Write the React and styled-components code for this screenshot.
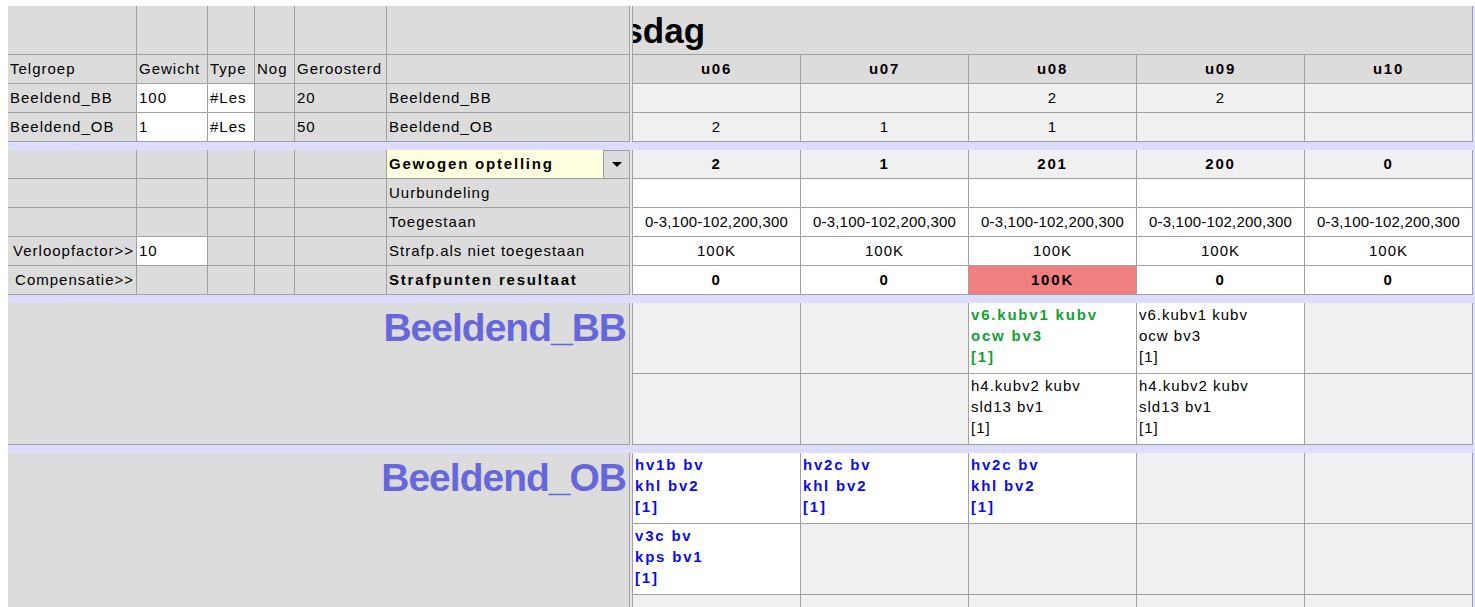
import React from 'react';
import styled, { createGlobalStyle } from 'styled-components';

const c = {
  line: '#a0a0a0',
  head: '#dcdcdc',
  cell: '#f0f0f0',
  white: '#ffffff',
  band: '#dcdcfc',
  yellow: '#ffffe0',
  red: '#f08080',
  green: '#13a033',
  blue: '#0c0ce8',
  label: '#6767dc',
  text: '#000000',
};

const GlobalStyle = createGlobalStyle`
  html, body {
    margin: 0;
    overflow: hidden;
    background: #fff;
  }
  body {
    padding: 6px 0 0 8px;
  }
`;

const Board = styled.div`
  display: flex;
  flex-direction: column;
  gap: 8px;
  height: calc(100vh - 6px);
  overflow: hidden;
  background: ${c.band};
  font-family: "Liberation Sans", Arial, sans-serif;
  color: ${c.text};
`;

const Section = styled.div`
  flex-shrink: 0;
  display: grid;
  grid-template-columns: 129px 71px 47px 40px 92px 243px 3px repeat(5, 168px);
  grid-template-rows: ${p => p.$rows};
`;

const Cell = styled.div`
  box-sizing: border-box;
  border-right: 1px solid ${c.line};
  border-bottom: 1px solid ${c.line};
  background: ${p => c[p.$tone || 'head']};
  padding: 0 2px;
  font-size: 15px;
  line-height: 28px;
  font-weight: ${p => (p.$bold ? 700 : 400)};
  letter-spacing: ${p => (p.$tight ? '0.2px' : p.$bold ? '1.8px' : '1px')};
  text-align: ${p => p.$align || 'left'};
  white-space: nowrap;
  overflow: hidden;
`;

const Splitter = styled.div`
  grid-column: 7;
  grid-row: 1 / -1;
  box-sizing: border-box;
  background: #e6e6e6;
  border-right: 1px solid ${c.line};
`;

const DayTitle = styled.div`
  grid-column: 8 / span 5;
  box-sizing: border-box;
  border-right: 1px solid ${c.line};
  border-bottom: 1px solid ${c.line};
  background: ${c.head};
  overflow: hidden;
  white-space: nowrap;
  padding-top: 7px;
  font-size: 35px;
  line-height: 1;
  font-weight: 700;
`;

/* the day header is scrolled: only the tail of the name is in view */
const ScrolledText = styled.span`
  display: inline-block;
  margin-left: -66px;
`;

const PickCell = styled(Cell)`
  display: flex;
  padding: 0;
`;

const PickValue = styled.span`
  flex: 1;
  padding-left: 2px;
  background: ${c.yellow};
`;

const PickButton = styled.span`
  width: 25px;
  display: flex;
  align-items: center;
  justify-content: center;
  background: ${c.head};
  border-left: 1px solid ${c.line};
  border-top: 1px solid ${c.line};
`;

const Caret = styled.span`
  width: 0;
  height: 0;
  border-left: 5px solid transparent;
  border-right: 5px solid transparent;
  border-top: 5px solid #000;
`;

const GroupLabel = styled.div`
  grid-column: 1 / span 6;
  grid-row: 1 / -1;
  box-sizing: border-box;
  border-right: 1px solid ${c.line};
  border-bottom: 1px solid ${c.line};
  background: ${c.head};
  padding: 5px 3px 0 0;
  text-align: right;
  font-size: 39px;
  line-height: 1;
  font-weight: 700;
  letter-spacing: -1px;
  color: ${c.label};
`;

const LessonCell = styled.div`
  box-sizing: border-box;
  border-right: 1px solid ${c.line};
  border-bottom: 1px solid ${c.line};
  background: ${p => (p.$filled ? c.white : c.cell)};
  padding: 1px 2px 0;
  font-size: 15px;
  line-height: 21px;
  font-weight: ${p => (p.$bold ? 700 : 400)};
  letter-spacing: ${p => (p.$bold ? '1.8px' : '1px')};
  color: ${p => c[p.$color] || c.text};
  white-space: nowrap;
  overflow: hidden;
`;

const hours = ['u06', 'u07', 'u08', 'u09', 'u10'];

const groups = [
  { name: 'Beeldend_BB', gewicht: '100', type: '#Les', rooster: '20', counts: ['', '', '2', '2', ''] },
  { name: 'Beeldend_OB', gewicht: '1', type: '#Les', rooster: '50', counts: ['2', '1', '1', '', ''] },
];

const summary = [
  { label: 'Gewogen optelling', picker: true, values: ['2', '1', '201', '200', '0'], bold: true, tone: 'cell' },
  { label: 'Uurbundeling', values: ['', '', '', '', ''], tone: 'white' },
  { label: 'Toegestaan', values: Array(5).fill('0-3,100-102,200,300'), tone: 'white', tight: true },
  { side: 'Verloopfactor>>', factor: '10', label: 'Strafp.als niet toegestaan', values: Array(5).fill('100K'), tone: 'white' },
  { side: 'Compensatie>>', label: 'Strafpunten resultaat', labelBold: true, values: ['0', '0', '100K', '0', '0'], bold: true, tone: 'white', alert: 2 },
];

const bbV6 = ['v6.kubv1 kubv', 'ocw bv3', '[1]'];
const bbH4 = ['h4.kubv2 kubv', 'sld13 bv1', '[1]'];
const obHv2c = ['hv2c bv', 'khl bv2', '[1]'];

const lessons = {
  Beeldend_BB: [
    [null, null, { lines: bbV6, color: 'green', bold: true }, { lines: bbV6 }, null],
    [null, null, { lines: bbH4 }, { lines: bbH4 }, null],
  ],
  Beeldend_OB: [
    [
      { lines: ['hv1b bv', 'khl bv2', '[1]'], color: 'blue', bold: true },
      { lines: obHv2c, color: 'blue', bold: true },
      { lines: obHv2c, color: 'blue', bold: true },
      null,
      null,
    ],
    [{ lines: ['v3c bv', 'kps bv1', '[1]'], color: 'blue', bold: true }, null, null, null, null],
    [null, null, null, null, null],
  ],
};

const HeaderSection = () => (
  <Section $rows="49px 29px 29px 29px">
    {Array.from({ length: 6 }, (_, i) => <Cell key={`e${i}`} />)}
    <Splitter />
    <DayTitle><ScrolledText>Dinsdag</ScrolledText></DayTitle>

    <Cell>Telgroep</Cell>
    <Cell>Gewicht</Cell>
    <Cell>Type</Cell>
    <Cell>Nog</Cell>
    <Cell>Geroosterd</Cell>
    <Cell />
    {hours.map(h => <Cell key={h} $bold $align="center">{h}</Cell>)}

    {groups.map(g => (
      <React.Fragment key={g.name}>
        <Cell>{g.name}</Cell>
        <Cell $tone="white">{g.gewicht}</Cell>
        <Cell $tone="white">{g.type}</Cell>
        <Cell />
        <Cell>{g.rooster}</Cell>
        <Cell>{g.name}</Cell>
        {g.counts.map((v, i) => <Cell key={i} $tone="cell" $align="center">{v}</Cell>)}
      </React.Fragment>
    ))}
  </Section>
);

const SummarySection = () => (
  <Section $rows="repeat(5, 29px)">
    <Splitter />
    {summary.map(row => (
      <React.Fragment key={row.label}>
        <Cell $align="right">{row.side}</Cell>
        <Cell $tone={row.factor ? 'white' : 'head'}>{row.factor}</Cell>
        <Cell />
        <Cell />
        <Cell />
        {row.picker ? (
          <PickCell $bold>
            <PickValue>{row.label}</PickValue>
            <PickButton><Caret /></PickButton>
          </PickCell>
        ) : (
          <Cell $bold={row.labelBold}>{row.label}</Cell>
        )}
        {row.values.map((v, i) => (
          <Cell
            key={i}
            $tone={row.alert === i ? 'red' : row.tone}
            $bold={row.bold}
            $tight={row.tight}
            $align="center"
          >
            {v}
          </Cell>
        ))}
      </React.Fragment>
    ))}
  </Section>
);

const GroupSection = ({ name }) => {
  const rows = lessons[name];
  return (
    <Section $rows={`repeat(${rows.length}, 71px)`}>
      <GroupLabel>{name}</GroupLabel>
      <Splitter />
      {rows.map((row, r) =>
        row.map((lesson, i) => (
          <LessonCell
            key={`${r}-${i}`}
            style={{ gridColumn: 8 + i, gridRow: r + 1 }}
            $filled={!!lesson}
            $bold={lesson?.bold}
            $color={lesson?.color}
          >
            {lesson?.lines.map(line => <div key={line}>{line}</div>)}
          </LessonCell>
        ))
      )}
    </Section>
  );
};

const App = () => (
  <>
    <GlobalStyle />
    <Board>
      <HeaderSection />
      <SummarySection />
      <GroupSection name="Beeldend_BB" />
      <GroupSection name="Beeldend_OB" />
    </Board>
  </>
);

export default App;
